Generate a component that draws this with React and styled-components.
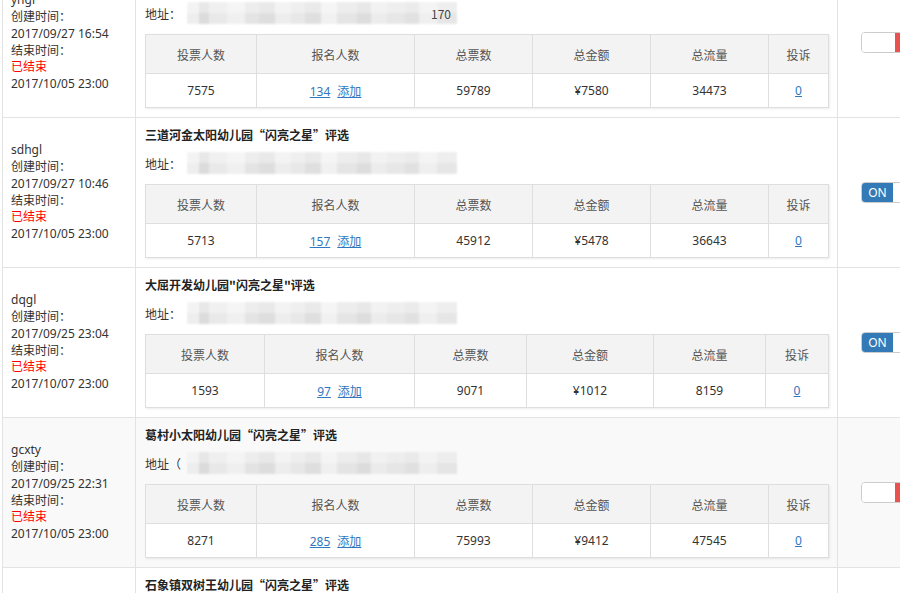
import styled, { createGlobalStyle } from "styled-components";

const GlobalStyle = createGlobalStyle`
  html, body {
    margin: 0;
    padding: 0;
    background: #fff;
    overflow: hidden;
  }
  body {
    font-family: "Noto Sans", "Noto Sans CJK SC", sans-serif;
    font-size: 12px;
    color: #333;
  }
`;

const Page = styled.div`
  width: 980px;
  margin-top: -32px;
  margin-left: 2px;
  border-left: 1px solid #e3e3e3;
`;

const Row = styled.div`
  display: grid;
  grid-template-columns: 133px 702px 1fr;
  height: 150px;
  border-bottom: 1px solid #e3e3e3;
  background: ${({ $hover }) => ($hover ? "#f9f9f9" : "#fff")};
  box-sizing: border-box;
`;

const InfoCell = styled.div`
  display: flex;
  flex-direction: column;
  justify-content: center;
  padding-left: 8px;
  line-height: 16.8px;
  border-right: 1px solid #e3e3e3;
  color: #333;
`;

const Ended = styled.span`
  color: #f00;
`;

const MainCell = styled.div`
  padding: 8px 9px 0 9px;
  border-right: 1px solid #e3e3e3;
  display: flex;
  flex-direction: column;
`;

const Title = styled.div`
  font-weight: 700;
  line-height: 18px;
  height: 18px;
  color: #222;
  font-family: "Noto Sans CJK SC", sans-serif;
`;

const Address = styled.div`
  display: flex;
  align-items: center;
  height: 24px;
  margin-top: 7px;
  color: #333;
  font-family: "Noto Sans CJK SC", sans-serif;
`;

const Blur = styled.span`
  display: inline-block;
  width: 270px;
  height: 22px;
  margin-left: 6px;
  filter: blur(1.2px);
  opacity: 0.85;
  background:
    linear-gradient(180deg, rgba(255,255,255,0.35) 0 50%, rgba(0,0,0,0) 50% 100%),
    linear-gradient(90deg,
      #ececec 0 12px, #d6d6d6 12px 22px, #e6e6e6 22px 40px, #eeeeee 40px 58px,
      #e0e0e0 58px 72px, #d9d9d9 72px 88px, #ebebeb 88px 104px, #e4e4e4 104px 118px,
      #dadada 118px 134px, #efefef 134px 150px, #e1e1e1 150px 170px, #d8d8d8 170px 184px,
      #e9e9e9 184px 200px, #e3e3e3 200px 218px, #dcdcdc 218px 232px, #ededed 232px 250px,
      #e2e2e2 250px 270px);
`;

const Tail = styled.span`
  position: relative;
  margin-left: -26px;
  color: #444;
`;

const Stats = styled.table`
  margin-top: 9px;
  width: 683px;
  border-collapse: collapse;
  table-layout: fixed;
  box-shadow: 1px 1px 2px rgba(0, 0, 0, 0.08);
  font-family: "Noto Sans", "Noto Sans CJK SC", sans-serif;

  & th,
  & td {
    border: 1px solid #dedede;
    text-align: center;
    padding: 0;
  }

  & th {
    height: 38px;
    background: #f3f3f3;
    font-weight: 400;
    color: #555;
    font-family: "Noto Sans CJK SC", sans-serif;
  }

  & td {
    height: 33px;
    background: #fff;
    color: #333;
  }
`;

const Link = styled.a`
  color: #2f78c0;
  text-decoration: underline;
  cursor: pointer;
  & + & {
    margin-left: 7px;
  }
`;

const SwitchCell = styled.div`
  display: flex;
  align-items: center;
  padding-left: 23px;
`;

const Switch = styled.div`
  display: flex;
  width: 80px;
  height: 19px;
  border: 1px solid #ccc;
  border-radius: 4px;
  overflow: hidden;
  background: #fff;
  flex-shrink: 0;
`;

const Handle = styled.span`
  width: ${({ $on }) => ($on ? "31px" : "33px")};
  flex-shrink: 0;
  display: flex;
  align-items: center;
  justify-content: center;
  font-family: "Noto Sans", sans-serif;
  font-size: 12px;
  color: #fff;
  background: ${({ $on }) => ($on ? "#337ab7" : "#fff")};
`;

const OffHandle = styled.span`
  flex: 1;
  background: #e8534f;
`;

const headers = ["投票人数", "报名人数", "总票数", "总金额", "总流量", "投诉"];
const defaultCols = [111, 158, 118, 118, 118, 60];

const rows = [
  {
    user: "yhgl",
    created: "2017/09/27 16:54",
    end: "2017/10/05 23:00",
    title: "小太阳幼儿园“闪亮之星”评选",
    tail: "170",
    stats: ["7575", "134", "59789", "¥7580", "34473", "0"],
    on: false,
  },
  {
    user: "sdhgl",
    created: "2017/09/27 10:46",
    end: "2017/10/05 23:00",
    title: "三道河金太阳幼儿园“闪亮之星”评选",
    stats: ["5713", "157", "45912", "¥5478", "36643", "0"],
    on: true,
  },
  {
    user: "dqgl",
    created: "2017/09/25 23:04",
    end: "2017/10/07 23:00",
    title: "大屈开发幼儿园\"闪亮之星\"评选",
    stats: ["1593", "97", "9071", "¥1012", "8159", "0"],
    cols: [119, 150, 112, 127, 112, 63],
    on: true,
  },
  {
    user: "gcxty",
    created: "2017/09/25 22:31",
    end: "2017/10/05 23:00",
    title: "葛村小太阳幼儿园“闪亮之星”评选",
    addrLabel: "地址（",
    stats: ["8271", "285", "75993", "¥9412", "47545", "0"],
    on: false,
    hover: true,
  },
  {
    user: "sxzgl",
    created: "2017/09/24 18:20",
    end: "2017/10/05 23:00",
    title: "石象镇双树王幼儿园“闪亮之星”评选",
    stats: ["6120", "201", "51233", "¥6210", "40117", "0"],
    on: true,
  },
];

function App() {
  return (
    <>
      <GlobalStyle />
      <Page>
        {rows.map((r, i) => (
          <Row key={i} $hover={r.hover}>
            <InfoCell>
              <span>{r.user}</span>
              <span>创建时间：</span>
              <span>{r.created}</span>
              <span>结束时间：</span>
              <Ended>已结束</Ended>
              <span>{r.end}</span>
            </InfoCell>
            <MainCell>
              <Title>{r.title}</Title>
              <Address>
                {r.addrLabel || "地址："}
                <Blur />
                {r.tail && <Tail>{r.tail}</Tail>}
              </Address>
              <Stats>
                <colgroup>
                  {(r.cols || defaultCols).map((w, j) => (
                    <col key={j} style={{ width: w }} />
                  ))}
                </colgroup>
                <thead>
                  <tr>
                    {headers.map((h) => (
                      <th key={h}>{h}</th>
                    ))}
                  </tr>
                </thead>
                <tbody>
                  <tr>
                    <td>{r.stats[0]}</td>
                    <td>
                      <Link>{r.stats[1]}</Link>
                      <Link>添加</Link>
                    </td>
                    <td>{r.stats[2]}</td>
                    <td>{r.stats[3]}</td>
                    <td>{r.stats[4]}</td>
                    <td>
                      <Link>{r.stats[5]}</Link>
                    </td>
                  </tr>
                </tbody>
              </Stats>
            </MainCell>
            <SwitchCell>
              <Switch>
                {r.on ? (
                  <>
                    <Handle $on>ON</Handle>
                    <Handle />
                  </>
                ) : (
                  <>
                    <Handle />
                    <OffHandle />
                  </>
                )}
              </Switch>
            </SwitchCell>
          </Row>
        ))}
      </Page>
    </>
  );
}

export default App;
